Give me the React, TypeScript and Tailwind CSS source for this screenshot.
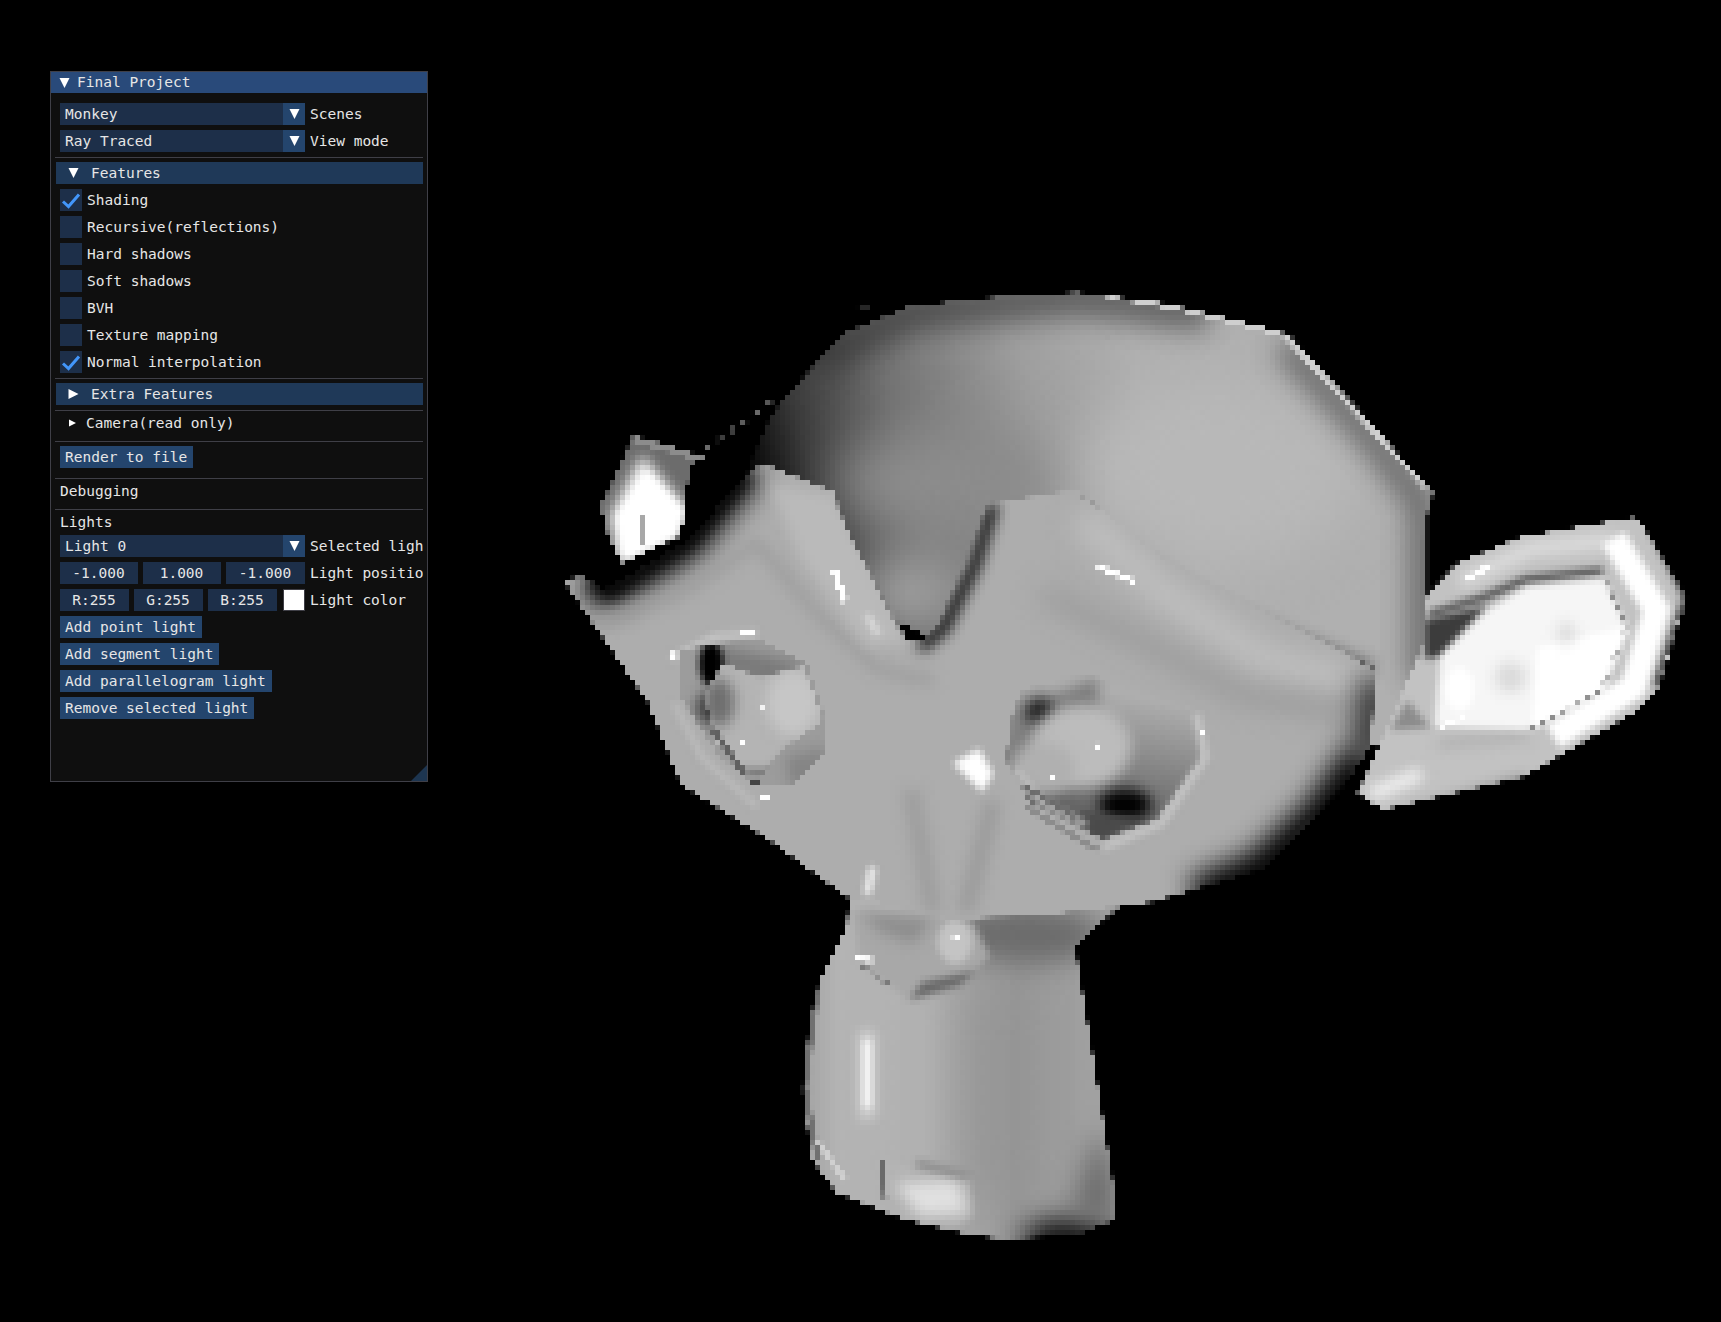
const labelCls = "text-[14.5px] leading-[17px] text-[#e6e6e6] whitespace-nowrap";

function Sep() {
  return <div className="h-px -mb-px bg-[#3f3f47]" />;
}

function Tri({ dir = "down", className = "" }: { dir?: "down" | "right"; className?: string }) {
  return (
    <svg viewBox="0 0 10 10" className={className}>
      <polygon points={dir === "down" ? "0,0 10,0 5,10" : "0,0 10,5 0,10"} fill="#ffffff" />
    </svg>
  );
}

function Combo({ value, label }: { value: string; label: string }) {
  return (
    <div className="flex ml-[5px] h-[22px] items-center">
      <div className="flex w-[245px] h-full bg-[#1d2f49]">
        <div className={`flex-1 pl-[5px] flex items-center ${labelCls}`}>{value}</div>
        <div className="w-[22px] bg-[#24456d] flex items-center justify-center">
          <Tri className="w-[11px] h-[10px]" />
        </div>
      </div>
      <div className={`ml-[5px] flex-1 overflow-hidden ${labelCls}`}>{label}</div>
    </div>
  );
}

function Check({ label, on }: { label: string; on?: boolean }) {
  return (
    <div className="flex ml-[5px] h-[22px] items-center">
      <div className="w-[22px] h-[22px] bg-[#1d2f49]">
        {on && (
          <svg viewBox="0 0 22 22" className="w-[22px] h-[22px]">
            <polyline points="3,12.5 8.5,17.5 19,5.5" fill="none" stroke="#4296fa" strokeWidth="3" />
          </svg>
        )}
      </div>
      <div className={`ml-[5px] ${labelCls}`}>{label}</div>
    </div>
  );
}

function Btn({ label }: { label: string }) {
  return (
    <div className="flex ml-[5px]">
      <div className={`h-[22px] pl-[5px] pr-[6px] bg-[#24456d] flex items-center ${labelCls}`}>{label}</div>
    </div>
  );
}

function Header({ label, open }: { label: string; open?: boolean }) {
  return (
    <div className="h-[22px] ml-px bg-[#1f3958] flex items-center pl-[12px]">
      <Tri dir={open ? "down" : "right"} className="w-[11px] h-[10px]" />
      <span className={`ml-[12px] ${labelCls}`}>{label}</span>
    </div>
  );
}

function Field({ text, width }: { text: string; width: string }) {
  return <div className={`${width} h-full bg-[#1d2f49] pr-px flex items-center justify-center ${labelCls}`}>{text}</div>;
}

function Panel() {
  return (
    <div className="relative w-[378px] h-[711px] ml-[50px] bg-[#0f0f0f] border border-[#3f3f47] font-['DejaVu_Sans_Mono',monospace]">
      <div className="h-[21px] bg-[#294a7a] flex items-center pl-[8px]">
        <Tri className="w-[11px] h-[10px]" />
        <span className={`ml-[7px] ${labelCls}`}>Final Project</span>
      </div>
      <div className="flex flex-col gap-[5px] pt-[10px] pl-[4px] pr-[4px]">
        <Combo value="Monkey" label="Scenes" />
        <Combo value="Ray Traced" label="View mode" />
        <Sep />
        <Header label="Features" open />
        <Check label="Shading" on />
        <Check label="Recursive(reflections)" />
        <Check label="Hard shadows" />
        <Check label="Soft shadows" />
        <Check label="BVH" />
        <Check label="Texture mapping" />
        <Check label="Normal interpolation" on />
        <Sep />
        <Header label="Extra Features" />
        <Sep />
        <div className="h-[21px] flex items-start pl-[14px]">
          <Tri dir="right" className="w-[7px] h-[8px] mt-[4px]" />
          <span className={`ml-[10px] ${labelCls}`}>Camera(read only)</span>
        </div>
        <Sep />
        <div className="mb-[5px]">
          <Btn label="Render to file" />
        </div>
        <Sep />
        <div className={`h-[21px] ml-[5px] ${labelCls}`}>Debugging</div>
        <Sep />
        <div className={`h-[16px] ml-[5px] ${labelCls}`}>Lights</div>
        <Combo value="Light 0" label="Selected light" />
        <div className="flex ml-[5px] h-[22px] items-center">
          <div className="flex gap-[5px] h-full w-[245px]">
            <Field text="-1.000" width="w-[78px]" />
            <Field text="1.000" width="w-[78px]" />
            <Field text="-1.000" width="w-[79px]" />
          </div>
          <div className={`ml-[5px] flex-1 overflow-hidden ${labelCls}`}>Light position</div>
        </div>
        <div className="flex ml-[5px] h-[22px] items-center">
          <div className="flex gap-[5px] h-full w-[245px]">
            <Field text="R:255" width="w-[69px]" />
            <Field text="G:255" width="w-[69px]" />
            <Field text="B:255" width="w-[69px]" />
            <div className="w-[22px] h-full ml-px bg-white border border-[#3f3f47]" />
          </div>
          <div className={`ml-[5px] flex-1 overflow-hidden ${labelCls}`}>Light color</div>
        </div>
        <Btn label="Add point light" />
        <Btn label="Add segment light" />
        <Btn label="Add parallelogram light" />
        <Btn label="Remove selected light" />
      </div>
      <svg viewBox="0 0 16 16" className="absolute right-0 bottom-0 w-[16px] h-[16px]">
        <polygon points="16,0 16,16 0,16" fill="#1d3550" />
      </svg>
    </div>
  );
}

const EAR_L = "577,396 642,416 630,425 624,452 624,471 619,489 567,513 555,492 546,459 555,446 565,422";
const CRANIUM =
  "702,379 716,361 744,330 772,302 828,279 901,271 981,266 1060,276 1155,299 1175,305 1240,375 1297,440 1306,449 1300,470 1300,560 1295,620 1260,680 1100,640 880,600 700,500 680,430";
const FACE =
  "512,528 530,525 551,537 628,492 680,432 695,422 760,448 775,490 827,583 842,583 855,568 900,459 980,446 1060,510 1165,565 1253,609 1249,680 1225,715 1150,792 1050,822 950,834 860,838 800,822 775,820 700,765 620,715 590,640";
const NECK =
  "774,815 771,844 747,892 739,923 734,959 731,993 739,1056 762,1087 823,1111 886,1126 914,1129 980,1126 1017,1111 1014,1075 996,962 983,883 980,862 1020,826 900,800";
const EAR_R =
  "1488,471 1385,489 1327,513 1300,541 1298,583 1248,698 1236,723 1260,738 1388,708 1488,650 1512,626 1537,544 1494,474";
const EAR_INNER = "1461,527 1391,534 1355,556 1312,598 1307,662 1391,665 1458,630 1482,571";
const SOCK_L = "620,592 653,586 692,583 735,604 750,647 752,686 723,714 686,716 653,686 620,635";
const BALL_L = "659,604 692,617 732,607 750,656 718,680 692,708 680,708 653,677 641,632";
const SOCK_R = "931,630 963,617 999,617 1087,645 1096,689 1054,747 1005,765 938,732 916,692 923,647";

function Monkey() {
  return (
    <svg viewBox="0 0 1721 1322" className="absolute inset-0 w-[1721px] h-[1322px]">
      <defs>
        <filter id="pix" filterUnits="userSpaceOnUse" x="0" y="0" width="1721" height="1322" colorInterpolationFilters="sRGB">
          <feFlood x="2" y="2" width="1" height="1" floodColor="#000" />
          <feComposite width="5" height="5" />
          <feTile result="dots" />
          <feComposite in="SourceGraphic" in2="dots" operator="in" />
          <feMorphology operator="dilate" radius="2" />
        </filter>
        <filter id="b3" filterUnits="userSpaceOnUse" x="0" y="0" width="1600" height="1250" colorInterpolationFilters="sRGB"><feGaussianBlur stdDeviation="3" /></filter>
        <filter id="b6" filterUnits="userSpaceOnUse" x="0" y="0" width="1600" height="1250" colorInterpolationFilters="sRGB"><feGaussianBlur stdDeviation="6" /></filter>
        <filter id="b12" filterUnits="userSpaceOnUse" x="0" y="0" width="1600" height="1250" colorInterpolationFilters="sRGB"><feGaussianBlur stdDeviation="12" /></filter>
        <filter id="b24" filterUnits="userSpaceOnUse" x="0" y="0" width="1600" height="1250" colorInterpolationFilters="sRGB"><feGaussianBlur stdDeviation="24" /></filter>
        <linearGradient id="skull" gradientUnits="userSpaceOnUse" x1="690" y1="440" x2="1040" y2="340">
          <stop offset="0" stopColor="#0a0a0a" />
          <stop offset="0.14" stopColor="#3a3a3a" />
          <stop offset="0.38" stopColor="#727272" />
          <stop offset="0.72" stopColor="#9e9e9e" />
          <stop offset="1" stopColor="#b0b0b0" />
        </linearGradient>
        <linearGradient id="neckg" gradientUnits="userSpaceOnUse" x1="735" y1="0" x2="1015" y2="0">
          <stop offset="0" stopColor="#a4a4a4" />
          <stop offset="0.1" stopColor="#b4b4b4" />
          <stop offset="0.4" stopColor="#b2b2b2" />
          <stop offset="0.68" stopColor="#979797" />
          <stop offset="1" stopColor="#a4a4a4" />
        </linearGradient>
        <linearGradient id="sockRg" gradientUnits="userSpaceOnUse" x1="1060" y1="640" x2="1040" y2="750">
          <stop offset="0" stopColor="#aeaeae" />
          <stop offset="1" stopColor="#636363" />
        </linearGradient>
        <clipPath id="cEarL"><polygon points={EAR_L} /></clipPath>
        <clipPath id="cSkull"><polygon points={CRANIUM} /></clipPath>
        <clipPath id="cFace"><polygon points={FACE} /></clipPath>
        <clipPath id="cNeck"><polygon points={NECK} /></clipPath>
        <clipPath id="cEarR"><polygon points={EAR_R} /></clipPath>
        <clipPath id="cSockL"><polygon points={SOCK_L} /></clipPath>
        <clipPath id="cBallL"><polygon points={BALL_L} /></clipPath>
        <clipPath id="cSockR"><polygon points={SOCK_R} /></clipPath>
      </defs>

      <g filter="url(#pix)">
        <g transform="scale(1.0976)">
          {/* far ear */}
          <g clipPath="url(#cEarL)">
            <polygon points={EAR_L} fill="#6c6c6c" />
            <polygon points="585,415 625,462 618,490 565,515 556,470" fill="#ffffff" filter="url(#b6)" />
            <polygon points="590,430 624,465 616,488 567,510 562,470" fill="#ffffff" filter="url(#b3)" />
            <polyline points="586,470 587,495" stroke="#a8a8a8" strokeWidth="5" fill="none" />
            <polyline points="577,400 640,418" stroke="#8c8c8c" strokeWidth="6" fill="none" />
          </g>

          {/* faint stray pixels */}
          <polyline points="642,410 703,366" stroke="#6a6a6a" strokeWidth="4" strokeDasharray="6 8" fill="none" />
          <rect x="782" y="276" width="10" height="4" fill="#6a6a6a" />

          {/* skull */}
          <g clipPath="url(#cSkull)">
            <polygon points={CRANIUM} fill="url(#skull)" />
            <polyline points="740,330 828,285 981,270 1100,285" stroke="#2c2c2c" strokeWidth="34" fill="none" opacity="0.6" filter="url(#b12)" />
            <ellipse cx="1110" cy="430" rx="130" ry="85" fill="#b8b8b8" filter="url(#b24)" />
            <ellipse cx="860" cy="440" rx="100" ry="50" fill="#8c8c8c" filter="url(#b24)" />
            <polyline points="1170,315 1250,400 1296,460 1296,620" stroke="#5a5a5a" strokeWidth="24" fill="none" opacity="0.85" filter="url(#b12)" />
            <ellipse cx="830" cy="540" rx="50" ry="40" fill="#a2a2a2" filter="url(#b24)" />
            <polyline points="1010,500 1120,560 1250,610" stroke="#5e5e5e" strokeWidth="14" fill="none" opacity="0.8" filter="url(#b6)" />
            <polyline points="1000,267 1080,282 1170,305 1240,380 1300,445" stroke="#cfcfcf" strokeWidth="5" fill="none" />
            <polyline points="1296,490 1296,540" stroke="#777777" strokeWidth="7" fill="none" />
          </g>

          {/* neck */}
          <g clipPath="url(#cNeck)">
            <polygon points={NECK} fill="url(#neckg)" />
            <ellipse cx="930" cy="852" rx="75" ry="26" fill="#6c6c6c" filter="url(#b12)" />
            <rect x="880" y="890" width="40" height="200" fill="#939393" filter="url(#b24)" />
            <polyline points="790,940 790,1018" stroke="#e8e8e8" strokeWidth="10" fill="none" filter="url(#b6)" />
            <polyline points="790,948 790,1008" stroke="#ffffff" strokeWidth="6" fill="none" filter="url(#b3)" />
            <polyline points="745,900 733,990 745,1056" stroke="#707070" strokeWidth="5" fill="none" />
            <polyline points="745,1040 770,1075" stroke="#d0d0d0" strokeWidth="5" fill="none" />
            <ellipse cx="975" cy="1128" rx="44" ry="16" fill="#000000" filter="url(#b12)" />
            <polygon points="1000,1030 1014,1060 1017,1115 975,1105" fill="#6a6a6a" filter="url(#b12)" />
            <polyline points="1000,965 1007,1010 1014,1060" stroke="#e0e0e0" strokeWidth="4" strokeDasharray="14 14" fill="none" />
            {/* mouth */}
            <polygon points="777,829 886,839 902,871 874,898 829,911 783,877" fill="#a8a8a8" filter="url(#b3)" />
            <polygon points="829,911 874,898 890,884 840,895" fill="#6a6a6a" filter="url(#b3)" />
            <ellipse cx="870" cy="858" rx="16" ry="20" fill="#c4c4c4" filter="url(#b3)" />
            <polygon points="785,832 850,838 832,860 800,848" fill="#8e8e8e" filter="url(#b6)" />
            <rect x="868" y="851" width="6" height="6" fill="#ffffff" />
            <polyline points="778,873 795,875" stroke="#ffffff" strokeWidth="5" fill="none" />
            <polyline points="785,880 815,900" stroke="#7a7a7a" strokeWidth="4" strokeDasharray="6 6" fill="none" />
            {/* chin */}
            <polygon points="800,1055 883,1073 886,1108 871,1117 823,1108 804,1087" fill="#b4b4b4" filter="url(#b3)" />
            <polygon points="815,1078 872,1075 882,1105 838,1108" fill="#e0e0e0" filter="url(#b6)" />
            <polyline points="803,1058 806,1092" stroke="#6a6a6a" strokeWidth="4" fill="none" />
            <polyline points="835,1060 883,1072" stroke="#909090" strokeWidth="8" fill="none" filter="url(#b3)" />
          </g>

          {/* face */}
          <g clipPath="url(#cFace)">
            <polygon points={FACE} fill="#adadad" />
            <polyline points="535,532 555,540 628,495 684,428" stroke="#000000" strokeWidth="26" fill="none" filter="url(#b12)" />
            <polyline points="538,530 555,538 628,492 680,432" stroke="#000000" strokeWidth="12" fill="none" filter="url(#b6)" />
            <polyline points="905,460 888,515 860,572 838,590" stroke="#000000" strokeWidth="10" fill="none" filter="url(#b6)" />
            <polyline points="540,570 620,540 690,495 745,560 800,610 850,620" stroke="#9e9e9e" strokeWidth="10" fill="none" filter="url(#b6)" />
            <polygon points="700,440 760,450 828,585 790,590 730,510" fill="#bababa" filter="url(#b6)" />
            <polyline points="985,470 1060,540 1150,600 1230,622" stroke="#bebebe" strokeWidth="30" fill="none" filter="url(#b12)" />
            <polyline points="950,540 1050,590 1130,632 1240,650" stroke="#969696" strokeWidth="14" fill="none" filter="url(#b12)" />
            <polyline points="1245,690 1205,745 1150,795 1090,820" stroke="#000000" strokeWidth="40" fill="none" filter="url(#b12)" />
            <polyline points="1253,620 1245,690" stroke="#2a2a2a" strokeWidth="26" fill="none" filter="url(#b12)" />
            <polyline points="984,449 1060,500 1165,556 1253,609" stroke="#5c5c5c" strokeWidth="4" fill="none" />
            <polyline points="762,455 778,492 826,583" stroke="#7c7c7c" strokeWidth="4" fill="none" />
            <polyline points="760,520 770,548" stroke="#ffffff" strokeWidth="6" fill="none" />
            <polyline points="1000,516 1034,530" stroke="#ffffff" strokeWidth="5" fill="none" />
            <polyline points="790,560 800,578" stroke="#e6e6e6" strokeWidth="5" fill="none" filter="url(#b3)" />
            <polygon points="868,695 892,682 905,705 895,722" fill="#ffffff" filter="url(#b3)" />
            <polyline points="830,720 850,830" stroke="#9e9e9e" strokeWidth="16" fill="none" filter="url(#b6)" />
            <polyline points="905,730 880,830" stroke="#9c9c9c" strokeWidth="16" fill="none" filter="url(#b6)" />
            <polyline points="790,815 795,790" stroke="#f4f4f4" strokeWidth="7" fill="none" filter="url(#b3)" />
          </g>

          {/* left eye */}
          <polyline points="612,600 650,580 690,577" stroke="#c8c8c8" strokeWidth="6" fill="none" filter="url(#b3)" />
          <polyline points="614,640 640,690 690,735" stroke="#bcbcbc" strokeWidth="6" fill="none" filter="url(#b3)" />
          <g clipPath="url(#cSockL)">
            <polygon points={SOCK_L} fill="#9c9c9c" />
            <polygon points="650,588 735,604 700,625 655,610" fill="#7a7a7a" filter="url(#b6)" />
            <ellipse cx="648" cy="605" rx="11" ry="20" fill="#000000" filter="url(#b3)" />
            <ellipse cx="652" cy="645" rx="18" ry="16" fill="#3c3c3c" filter="url(#b6)" />
            <polygon points="715,690 752,680 752,716 720,716" fill="#858585" filter="url(#b6)" />
            <g clipPath="url(#cBallL)">
              <polygon points={BALL_L} fill="#b4b4b4" />
              <ellipse cx="722" cy="640" rx="24" ry="30" fill="#c6c6c6" filter="url(#b6)" />
              <ellipse cx="655" cy="640" rx="14" ry="22" fill="#6e6e6e" filter="url(#b6)" />
              <polygon points="670,700 700,700 725,675 730,690 700,720" fill="#7a7a7a" filter="url(#b3)" />
            </g>
            <polyline points="650,665 680,708" stroke="#606060" strokeWidth="5" fill="none" />
            <rect x="678" y="711" width="14" height="5" fill="#444444" />
          </g>
          <rect x="674" y="574" width="13" height="5" fill="#ffffff" />
          <rect x="612" y="594" width="5" height="8" fill="#ffffff" />
          <rect x="693" y="641" width="5" height="4" fill="#ffffff" />
          <rect x="673" y="674" width="5" height="5" fill="#ffffff" />
          <rect x="692" y="724" width="11" height="4" fill="#ffffff" />

          {/* right eye */}
          <g clipPath="url(#cSockR)">
            <polygon points={SOCK_R} fill="url(#sockRg)" />
            <polygon points="925,650 1000,617 1000,645 950,680 925,690" fill="#7c7c7c" filter="url(#b6)" />
            <ellipse cx="947" cy="648" rx="13" ry="12" fill="#202020" filter="url(#b6)" />
            <ellipse cx="985" cy="680" rx="46" ry="38" fill="#bcbcbc" filter="url(#b6)" />
            <ellipse cx="950" cy="700" rx="30" ry="24" fill="#b0b0b0" filter="url(#b6)" />
            <ellipse cx="1025" cy="733" rx="24" ry="14" fill="#000000" filter="url(#b6)" />
            <polygon points="985,740 1040,745 1005,765 975,752" fill="#4a4a4a" filter="url(#b3)" />
            <polyline points="925,700 950,732 990,752" stroke="#c0c0c0" strokeWidth="6" fill="none" filter="url(#b3)" />
            <polyline points="932,715 978,744" stroke="#6c6c6c" strokeWidth="4" fill="none" />
          </g>
          <polyline points="1090,650 1098,690 1058,750 1005,772" stroke="#c6c6c6" strokeWidth="7" fill="none" filter="url(#b3)" />
          <polyline points="935,735 1000,775" stroke="#8c8c8c" strokeWidth="5" fill="none" />
          <rect x="997" y="677" width="5" height="5" fill="#ffffff" />
          <rect x="957" y="706" width="5" height="5" fill="#ffffff" />
          <rect x="1092" y="665" width="5" height="5" fill="#ffffff" />

          {/* near ear */}
          <g clipPath="url(#cEarR)">
            <polygon points={EAR_R} fill="#c2c2c2" />
            <polyline points="1330,530 1395,500 1470,492" stroke="#dcdcdc" strokeWidth="14" fill="none" filter="url(#b6)" />
            <polygon points="1298,565 1355,552 1312,598 1298,600" fill="#3c3c3c" filter="url(#b3)" />
            <polyline points="1302,560 1350,545 1390,528 1460,520" stroke="#505050" strokeWidth="7" fill="none" filter="url(#b3)" />
            <polyline points="1336,528 1358,515" stroke="#ffffff" strokeWidth="5" fill="none" />
            <polyline points="1470,490 1509,556 1488,626 1415,671" stroke="#ffffff" strokeWidth="24" fill="none" filter="url(#b3)" />
            <polyline points="1505,480 1537,544 1510,625" stroke="#2c2c2c" strokeWidth="7" fill="none" filter="url(#b3)" />
            <polyline points="1500,478 1537,542 1512,625" stroke="#c8c8c8" strokeWidth="3" strokeDasharray="5 6" fill="none" />
            <polygon points="1267,665 1303,663 1282,638" fill="#8c8c8c" filter="url(#b3)" />
            <polyline points="1248,724 1295,705" stroke="#f4f4f4" strokeWidth="12" fill="none" filter="url(#b6)" />
            <polyline points="1310,678 1391,670" stroke="#a8a8a8" strokeWidth="6" fill="none" filter="url(#b6)" />
            <polyline points="1280,745 1390,712" stroke="#6a6a6a" strokeWidth="8" fill="none" filter="url(#b6)" />
            <polygon points={EAR_INNER} fill="#f6f6f6" filter="url(#b3)" />
            <polygon points="1400,590 1485,570 1460,630 1395,665" fill="#ffffff" filter="url(#b3)" />
            <ellipse cx="1376" cy="617" rx="14" ry="14" fill="#dadada" filter="url(#b6)" />
            <ellipse cx="1427" cy="577" rx="8" ry="10" fill="#dadada" filter="url(#b6)" />
            <ellipse cx="1330" cy="628" rx="14" ry="20" fill="#ffffff" filter="url(#b3)" />
            <polyline points="1462,528 1482,571 1458,630 1395,664" stroke="#8c8c8c" strokeWidth="2.5" strokeDasharray="7 5" fill="none" />
            <polyline points="1312,662 1336,653" stroke="#ffffff" strokeWidth="4" fill="none" />
          </g>
        </g>
      </g>
    </svg>
  );
}

export default function App() {
  return (
    <div className="relative w-[1721px] h-[1322px] bg-black overflow-hidden">
      <Monkey />
      <div className="relative pt-[71px]">
        <Panel />
      </div>
    </div>
  );
}
